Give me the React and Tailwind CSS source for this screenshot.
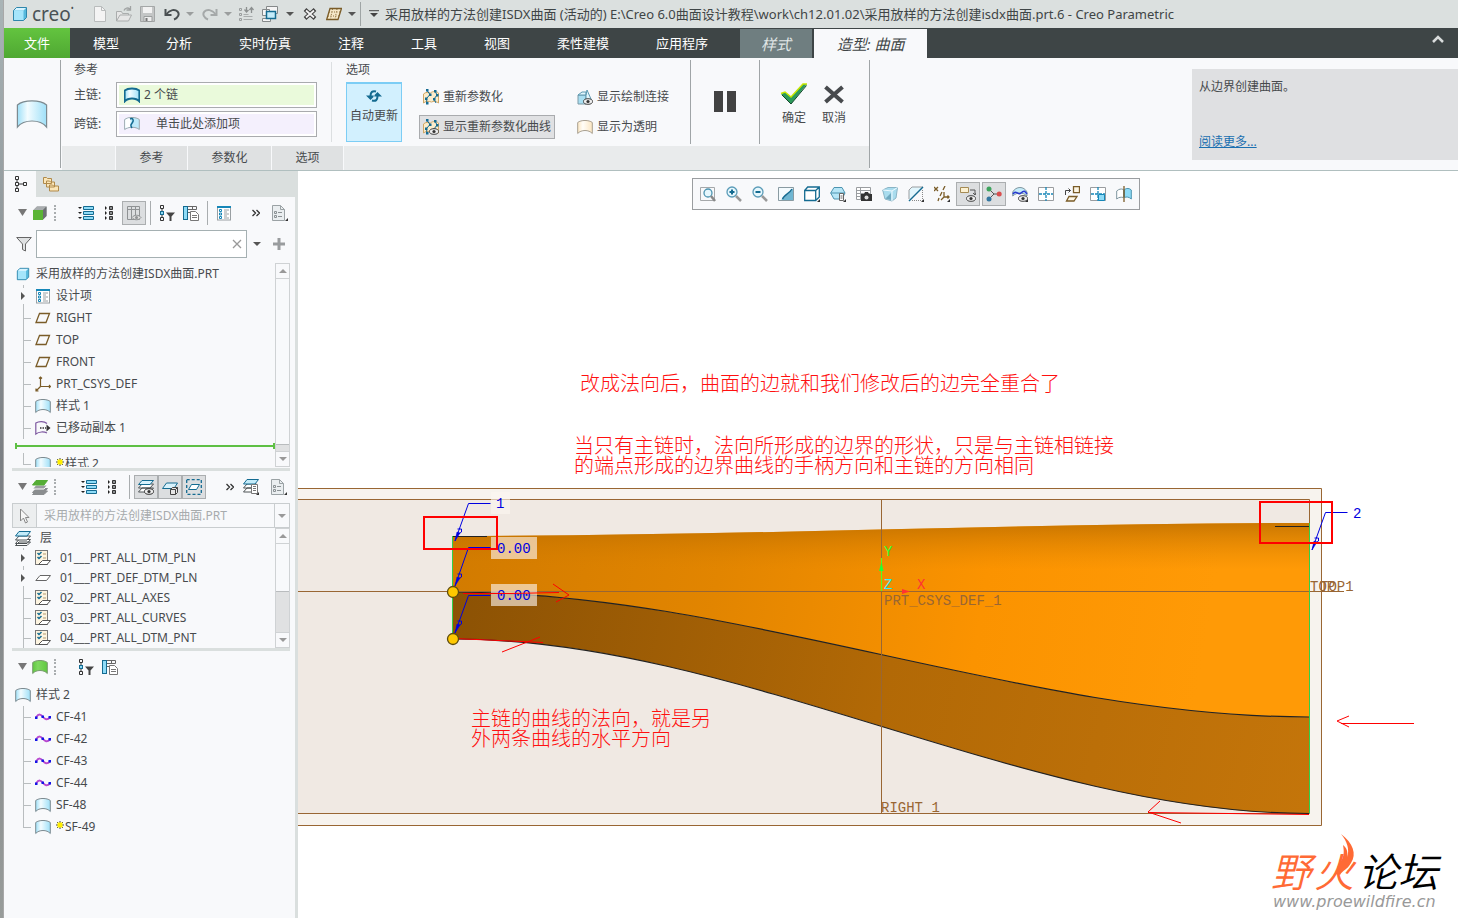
import clsx from 'clsx'

function Icon({ children, className = 'size-4', box = '0 0 16 16' }) {
  return (
    <svg viewBox={box} className={clsx('shrink-0', className)} fill="none" aria-hidden="true">
      {children}
    </svg>
  )
}

/* ---------- shared icons ---------- */

function CubeIcon({ className }) {
  return (
    <Icon className={className}>
      <path d="M1.500 4.500 4.500 1.500H14.500V11.500L11.500 14.500H1.500Z" fill="#57b9dd" />
      <path d="M1.500 4.500 4.500 1.500H14.500L11.500 4.500Z" fill="#d8f4ff" />
      <rect x="1.500" y="4.500" width="10" height="10" fill="#a5e5fb" />
      <path d="M1.500 4.500 4.500 1.500H14.500V11.500L11.500 14.500H1.500Z" stroke="#2f86ab" />
    </Icon>
  )
}

function SurfaceIcon({ className, stroke = '#7c8a90', from = '#f3fcff', to = '#9fe0f8', width = 1 }) {
  const id = 'surf' + from.slice(1) + to.slice(1)
  return (
    <Icon className={className}>
      <defs>
        <linearGradient id={id} x1="0" x2="1">
          <stop offset="0" stopColor={to} />
          <stop offset="0.35" stopColor={from} />
          <stop offset="1" stopColor={to} />
        </linearGradient>
      </defs>
      <path
        d="M.7 3.500C4 .8 12 .8 15.300 3.500V14.500C12 10.500 4 10.500.7 14.500Z"
        fill={`url(#${id})`}
        stroke={stroke}
        strokeWidth={width}
      />
    </Icon>
  )
}

function PlaneIcon() {
  return (
    <Icon>
      <path d="M4.500 3.500H14.500L11 12.500H1Z" stroke="#7a5c28" strokeWidth="1.300" />
    </Icon>
  )
}

function CsysIcon() {
  return (
    <Icon>
      <path d="M5.500 1V10.500H15.500M5.500 10.500 1 15M4 2.500 5.500 1 7 2.500M14 9l1.500 1.500L14 12M1 12.500V15h2.500" stroke="#7a5c28" strokeWidth="1.200" />
    </Icon>
  )
}

function CopyIcon() {
  return (
    <Icon>
      <path d="M12 3.500C9 1 4 1 .8 3V14C4 11.500 9 11.500 12 13" stroke="#7d58a0" strokeWidth="1.200" />
      <path d="M5 8h6" stroke="#333" strokeWidth="1.500" strokeDasharray="1.500 1" />
      <path d="M11.500 4.500 15.500 8l-4 3.500Z" fill="#333" />
    </Icon>
  )
}

function DesignItemsIcon() {
  return (
    <Icon>
      <rect x="1.500" y="1.500" width="13" height="13.500" fill="#fff" stroke="#9aa0a3" />
      <path d="M1 2h14" stroke="#1687b8" strokeWidth="2" />
      <path d="M3.500 4.500h2v2h-2zM3.500 8h2v2h-2zM3.500 11.500h2v2h-2z" stroke="#1687b8" />
      <path d="M8 5h5M8 7h3M8 9h5M8 11h3M8 13h5" stroke="#9aa0a3" />
    </Icon>
  )
}

function CurveIcon() {
  return (
    <Icon>
      <path d="M1 8.500C4 4 6 5.500 8 8s4 3.500 7 .5" stroke="#b94bd0" strokeWidth="2" />
      <path d="M0 7.500h2.500V10H0zM6.500 6.500H9V9H6.500zM13.500 7H16v2.500h-2.500z" fill="#1414e6" />
    </Icon>
  )
}

function ExpandIcon() {
  return (
    <Icon>
      <path d="M5.500 1.500h10v3h-10zM5.500 6.500h10v3h-10zM5.500 11.500h10v3h-10z" fill="#8edbf7" stroke="#146b91" />
      <path d="M0 2h4L2 4zM0 7h4L2 9zM0 12h4l-2 2z" fill="#222" />
    </Icon>
  )
}

function CollapseIcon() {
  return (
    <Icon>
      <path d="M7.500 1.500h3v3h-3zM7.500 6.500h3v3h-3zM7.500 11.500h3v3h-3z" fill="#8c8f91" stroke="#333" />
      <path d="M3 1v4l2-2zM3 6v4l2-2zM3 11v4l2-2z" fill="#222" />
    </Icon>
  )
}

function ColumnsIcon() {
  return (
    <Icon>
      <path d="M1.500 1.500h12v13h-12zM1.500 4.500h12M5.500 1.500v13M9.500 1.500v9" stroke="#8f9294" />
      <path d="M6 12.500c2-3 7-3 9 0-2 3-7 3-9 0Z" fill="#ddd" stroke="#8f9294" />
      <circle cx="10.500" cy="12.500" r="1.500" fill="#8f9294" />
    </Icon>
  )
}

function TreeFilterIcon() {
  return (
    <Icon>
      <path d="M1.500.500h3v3h-3zM1.500 12.500h3v3h-3zM3 3.500V6M3 10v2.500" stroke="#333" />
      <rect x="1.500" y="6.500" width="3" height="3" fill="#8edbf7" stroke="#146b91" />
      <path d="M7 7.500h9l-3.500 4V16h-2v-4.500Z" fill="#444" />
    </Icon>
  )
}

function TreeSettingsIcon() {
  return (
    <Icon>
      <path d="M4.500 1.500h9v3h-9zM9.500 1.500v3M4.500 7.500h3" stroke="#666" />
      <rect x=".5" y="1.500" width="4" height="13" fill="#8edbf7" stroke="#146b91" />
      <path d="M7.500 6.500h5l3 3v6h-8Z" fill="#fff" stroke="#777" />
      <path d="M9 10.500h5M9 12.500h5" stroke="#777" />
    </Icon>
  )
}

function DocIcon() {
  return (
    <Icon>
      <path d="M.5.500h8l4 4v11H.5Z" fill="#eaeef0" stroke="#9ba2a5" />
      <path d="M8.500.500v4h4" stroke="#9ba2a5" />
      <path d="M2.500 6.500h2v2h-2zM2.500 10.500h2v2h-2z" stroke="#8b9194" />
      <path d="M6 7.500h4M6 11.500h4" stroke="#8b9194" />
      <path d="M16 13v3h-3Z" fill="#333" />
    </Icon>
  )
}

function LayersIcon({ green }) {
  return (
    <Icon>
      <path d="M4 9.500h11.500L12 13.500H.5ZM4 12h11.500L12 15.500H.5Z" fill={green ? '#8a8d8f' : '#fff'} stroke={green ? '#8a8d8f' : '#4d5254'} />
      <path d="M4 6h11.500L12 10H.5Z" fill={green ? '#9a9d9f' : '#fff'} stroke={green ? '#fff' : '#4d5254'} />
      <path d="M4 1.500h11.500L12 6H.5Z" fill={green ? '#55ad35' : '#c4ecfa'} stroke={green ? '#55ad35' : '#146b91'} />
    </Icon>
  )
}

function LayerEyeIcon() {
  return (
    <Icon>
      <path d="M4 5h11.500L12 9H.5ZM4 9h11.500L12 13H.5Z" fill="#fff" stroke="#4d5254" />
      <path d="M4 1.500h11.500L12 5.500H.5Z" fill="#d8f2fc" stroke="#146b91" />
      <ellipse cx="11" cy="12.500" rx="4.500" ry="2.800" fill="#eee" stroke="#333" />
      <circle cx="11" cy="12.500" r="1.600" fill="#333" />
    </Icon>
  )
}

function LayerCubeIcon() {
  return (
    <Icon>
      <path d="M4.500 4h11L12 9.500H.5Z" fill="#d8f2fc" stroke="#146b91" />
      <path d="M8.500 10.500h5v5h-5zM8.500 10.500l2-2h5v5l-2 2M13.500 10.500l2-2" fill="#e6e6e6" stroke="#444" />
    </Icon>
  )
}

function LayerSelectIcon() {
  return (
    <Icon>
      <rect x=".7" y=".7" width="14.600" height="14.600" stroke="#146b91" strokeWidth="1.300" strokeDasharray="3 2" />
      <path d="M5.500 5.500h8L10.500 10.500h-8Z" fill="#fff" stroke="#146b91" />
    </Icon>
  )
}

function LayerListIcon() {
  return (
    <Icon>
      <path d="M4 5h9.500L10 9H.5ZM4 9h9.500L10 13H.5Z" fill="#fff" stroke="#4d5254" />
      <path d="M4 .5h11.500L12 5H.5Z" fill="#c4ecfa" stroke="#146b91" />
      <path d="M8.500 5.500h6v9h-6z" fill="#fff" stroke="#777" />
      <path d="M10 7.500h3M10 9.500h3M10 11.500h3" stroke="#777" />
      <path d="M16 13v3h-3Z" fill="#333" />
    </Icon>
  )
}

function RuleIcon() {
  return (
    <Icon>
      <rect x=".5" y=".5" width="12" height="14" fill="#fdf4e0" stroke="#777" />
      <path d="M2.500 3 4 4.500 6.500 2M2.500 7 4 8.500 6.500 6" stroke="#146b91" strokeWidth="1.500" />
      <path d="M8 4h3M8 8h3" stroke="#b19a70" />
      <path d="M7.500 10.500h8L12 14.500H3.500Z" fill="#fff" stroke="#555" />
    </Icon>
  )
}

function LayerPlaneIcon() {
  return (
    <Icon>
      <path d="M5 5.500h10.500L11.500 10.500H.8Z" fill="#fff" stroke="#666" />
    </Icon>
  )
}

function Spark() {
  return (
    <Icon className="size-2" box="0 0 8 8">
      <path d="M4 0v8M0 4h8M1 1l6 6M7 1 1 7" stroke="#444" />
      <path d="M1.500 1.500h5v5h-5z" fill="#ffee00" />
    </Icon>
  )
}

function Eye() {
  return (
    <>
      <ellipse cx="11" cy="12.500" rx="4.500" ry="2.800" fill="#eee" stroke="#444" />
      <circle cx="11" cy="12.500" r="1.600" fill="#333" />
    </>
  )
}

function Caret({ className = 'text-[#555]' }) {
  return (
    <Icon className={clsx('h-1 w-2', className)} box="0 0 8 4">
      <path d="M0 0h8L4 4Z" fill="currentColor" />
    </Icon>
  )
}

/* ---------- title bar ---------- */

function TitleBar() {
  return (
    <header className="flex h-7 items-center overflow-hidden bg-[#dbe0df] pl-2 text-[13px] leading-4 text-[#3f4546]">
      <CubeIcon className="size-4" />
      <span className="ml-1 w-14 text-[19px] leading-5 text-[#4a5255]">
        creo<span className="align-top text-[8px] leading-2">•</span>
      </span>
      <div className="flex items-center">
        <button type="button" aria-label="新建">
          <Icon className="ml-1 size-4">
            <path d="M2.500.500h7l4 4v11h-11Z" fill="#f4f4f4" stroke="#b9bcbc" />
            <path d="M9.500.500v4h4" stroke="#b9bcbc" />
          </Icon>
        </button>
        <button type="button" aria-label="打开" className="ml-2">
          <Icon>
            <path d="M.5 15V5.500h5l1 2h6V9M.5 15 4 9h11.500L12.500 15Z" fill="#e6e6e6" stroke="#aaadad" />
            <path d="M8 4.500c1-3 4-3 6-1.500M14.500 0v4h-4" stroke="#a0a3a3" strokeWidth="1.300" />
          </Icon>
        </button>
        <button type="button" aria-label="保存" className="ml-2">
          <Icon>
            <path d="M.5.500h14v15h-14z" fill="#c4c6c6" stroke="#a4a7a7" />
            <path d="M3 1h9v6H3z" fill="#f2f2f2" />
            <path d="M4 10.500h8v5H4z" fill="#eee" stroke="#9b9e9e" />
            <path d="M5.500 12h2v3h-2z" fill="#777" />
          </Icon>
        </button>
        <button type="button" aria-label="撤消" className="ml-2">
          <Icon>
            <path d="M1.500 3v6h6" stroke="#4a5052" strokeWidth="2" />
            <path d="M2.500 8C6 3.500 11 3 13.500 5.500S14 12 10 13.500" stroke="#4a5052" strokeWidth="2" />
          </Icon>
        </button>
        <span className="ml-1.5"><Caret className="text-[#9b9e9e]" /></span>
        <button type="button" aria-label="重做" className="ml-2">
          <Icon>
            <path d="M14.500 3v6h-6" stroke="#a5a9a9" strokeWidth="2" />
            <path d="M13.500 8C10 3.500 5 3 2.500 5.500S2 12 6 13.500" stroke="#a5a9a9" strokeWidth="2" />
          </Icon>
        </button>
        <span className="ml-1.5"><Caret className="text-[#9b9e9e]" /></span>
        <button type="button" aria-label="重新生成" className="ml-1.5">
          <Icon>
            <path d="M1.500 2.500h2v2h-2zM1.500 7.500h2v2h-2zM1.500 12.500h2v2h-2z" stroke="#999d9d" />
            <path d="M5.500 8.500h5M5.500 10.500h9M5.500 13.500h9" stroke="#a9adad" />
            <path d="M8.500 1v5m-2-2.500 2 2.500 2-2M13.500 7V2m-2 2 2-2.500 2 2.500" stroke="#8c9090" strokeWidth="1.300" />
          </Icon>
        </button>
        <button type="button" aria-label="窗口" className="ml-2">
          <Icon>
            <path d="M4.500.500h11v7h-11zM.5 3.500h7v6h-7zM.5 12.500h8v3h-8z" fill="#f5f5f5" stroke="#85898a" />
            <path d="M4.500 5.500h9v7h-9z" fill="#c4ecfa" stroke="#146b91" strokeWidth="1.500" />
          </Icon>
        </button>
        <span className="ml-2"><Caret /></span>
        <button type="button" aria-label="关闭窗口" className="ml-2">
          <Icon>
            <path d="M3 3.500l10 9M13 3.500l-10 9" stroke="#444" strokeWidth="4" />
            <path d="M4 4.500l8 7M12 4.500l-8 7" stroke="#f4f4f4" strokeWidth="1.800" />
          </Icon>
        </button>
        <button type="button" aria-label="草绘" className="ml-2">
          <Icon>
            <path d="M4 2.500h11.500L12 13.500H.7Z" fill="#f5e8c8" stroke="#7a5c28" strokeWidth="1.300" />
            <path d="M6.500 3 4.500 13M11 3 9 13M3 6h11M2 10h11" stroke="#8a6d3a" strokeDasharray="1 1.500" />
          </Icon>
        </button>
        <span className="ml-1.5"><Caret /></span>
        <span className="ml-1 h-6 w-px bg-[#9fa5a5]" />
        <span className="ml-2">
          <Icon className="h-2 w-2.5" box="0 0 10 8">
            <path d="M0 .7h10" stroke="#444" />
            <path d="M1 3h8L5 7Z" fill="#444" />
          </Icon>
        </span>
      </div>
      <h1 className="ml-1.5 whitespace-nowrap">
        采用放样的方法创建ISDX曲面 (活动的) E:\Creo 6.0曲面设计教程\work\ch12.01.02\采用放样的方法创建isdx曲面.prt.6 - Creo Parametric
      </h1>
    </header>
  )
}

/* ---------- ribbon ---------- */

const tabs = ['模型', '分析', '实时仿真', '注释', '工具', '视图', '柔性建模', '应用程序']

function TabBar() {
  return (
    <nav className="flex h-[30px] bg-[#3e4546] text-[13px] leading-4 text-white">
      <button type="button" className="w-[66px] shrink-0 bg-linear-to-b from-[#63c43f] to-[#4fa832]">
        文件
      </button>
      <div className="flex gap-[47px] pr-8 pl-[23px]">
        {tabs.map((t) => (
          <button key={t} type="button" className="whitespace-nowrap">
            {t}
          </button>
        ))}
      </div>
      <button type="button" className="mt-px w-[72px] shrink-0 bg-[#6f7e80] text-[15px] text-[#e0e6e6] italic">
        样式
      </button>
      <button type="button" className="mt-px ml-0.5 w-[113px] shrink-0 bg-[#f8f9fb] text-[15px] text-[#3f4546] italic">
        造型: 曲面
      </button>
      <button type="button" aria-label="折叠功能区" className="mr-3.5 ml-auto">
        <Icon className="mb-2 h-2 w-3" box="0 0 12 8">
          <path d="M1 7 6 2l5 5" stroke="#d9dcdc" strokeWidth="2.500" />
        </Icon>
      </button>
    </nav>
  )
}

function ChainField({ id, label, value, tone, icon }) {
  return (
    <div className="flex items-center">
      <label htmlFor={id} className="w-[42px]">
        {label}
      </label>
      <div className="flex h-[26px] w-[201px] border border-[#a9abae] bg-white p-0.5">
        <div className={clsx('flex w-full items-center pl-[5px]', tone)}>
          {icon}
          <input id={id} readOnly value={value} className={clsx('w-36 bg-transparent outline-none', id === 'cross' ? 'ml-4' : 'ml-1')} />
        </div>
      </div>
    </div>
  )
}

function ReparamIcon({ eye }) {
  return (
    <Icon>
      <path d="M.5 5c2-2 5-2 7-1 2-2 6-2 8 0v10c-2-2-5-2-7-1-3-1-6-1-8 1Z" fill="#fbeccb" stroke="#d0a765" />
      <path d="M4 1.500l3 4-3.500 4 .5 5M12 2l2 4-3 4 2 4" stroke="#146b91" />
      <path d="M3 0h2.500v2.500H3zM6 4.500h2.500V7H6zM2 8.500h2.500V11H2zM11 1h2.500v2.500H11zM13 5h2.500v2.500H13zM10 9h2.500v2.500H10zM3 13h2.500v2.500H3z" fill="#146b91" />
      {eye && <Eye />}
    </Icon>
  )
}

function Ribbon() {
  return (
    <section className="flex min-h-[113px] border-b border-[#b0bfbf] bg-[#f8f9fb] text-xs leading-4 text-[#474a4d]">
      <div className="my-0.5 flex w-[57px] shrink-0 items-center justify-center border-r border-[#a0a5a7]">
        <SurfaceIcon className="size-8" width={0.6} />
      </div>
      <div className="ml-px flex shrink-0 flex-col">
        <div className="flex h-[88px]">
          <div className="pt-1 pl-3">
            <h2>参考</h2>
            <div className="mt-1 flex flex-col gap-[3px]">
              <ChainField
                id="primary"
                label="主链:"
                value="2 个链"
                tone="bg-[#eafadb]"
                icon={<SurfaceIcon stroke="#146b91" width={1.8} />}
              />
              <ChainField
                id="cross"
                label="跨链:"
                value="单击此处添加项"
                tone="bg-[#f4f0fd]"
                icon={
                  <Icon>
                    <path d="M.7 3.500C4 .8 12 .8 15.300 3.500V13.500C12 10.500 4 10.500.7 13.500Z" fill="#bfeafa" stroke="#9aa6ab" />
                    <path d="M1.200 4C3 2.500 5 2 6.500 2v9c-2 0-4 .5-5.300 1.500Z" fill="#fff" />
                    <path d="M6 3c3-1.500 4 1.500 2.500 3.500S6 9 8 12" stroke="#146b91" strokeWidth="1.500" />
                  </Icon>
                }
              />
            </div>
          </div>
          <div className="mt-1 mb-1 ml-3.5 w-px bg-[#dcdfe1]" />
          <div className="ml-3.5 pt-1">
            <h2>选项</h2>
            <div className="mt-1 flex">
              <button type="button" className="flex h-[60px] w-14 flex-col items-center border border-t-2 border-[#7ccdf5] bg-[#d2f0fe] pt-1">
                <Icon>
                  <path d="M10 3.500C6.500 2.500 4.500 4 4.500 8M6 12.500c4 1 5.500-.5 5.500-4.500" stroke="#146b91" strokeWidth="2" />
                  <path d="M0 7.500h9L4.500 12ZM7 8.500h9L11.500 4Z" fill="#146b91" />
                </Icon>
                <span className="mt-1 whitespace-nowrap">自动更新</span>
              </button>
              <div className="ml-[17px] flex flex-col gap-1.5 pt-[3px]">
                <button type="button" className="flex h-6 items-center gap-1 pl-1">
                  <ReparamIcon />
                  重新参数化
                </button>
                <button type="button" className="flex h-6 w-34 items-center gap-1 border border-[#a9abae] bg-[#e0e1e3] pl-[3px] whitespace-nowrap">
                  <ReparamIcon eye />
                  显示重新参数化曲线
                </button>
              </div>
              <div className="ml-[22px] flex flex-col gap-1.5 pt-[3px]">
                <button type="button" className="flex h-6 items-center gap-1">
                  <Icon>
                    <path d="M1 6h8v9H1z" fill="#a9dff2" stroke="#7d9aa6" />
                    <path d="M1 6l4-3h4v3ZM9 6l1-5 4 9v4H9Z" fill="#e2f6fd" stroke="#5b98b1" />
                    <Eye />
                  </Icon>
                  显示绘制连接
                </button>
                <button type="button" className="flex h-6 items-center gap-1">
                  <SurfaceIcon from="#fffdf8" to="#fbe6c2" stroke="#a89f90" />
                  显示为透明
                </button>
              </div>
            </div>
          </div>
          <div className="my-0.5 ml-[21px] w-px bg-[#a0a5a7]" />
          <button type="button" aria-label="暂停" className="flex w-[68px] items-center justify-center">
            <Icon className="h-6 w-6" box="0 0 24 24">
              <path d="M1 1h9v21H1zM14 1h9v21h-9z" fill="#424242" />
            </Icon>
          </button>
          <div className="my-0.5 w-px bg-[#a0a5a7]" />
          <div className="flex gap-3 pt-6 pr-[21px] pl-5">
            <button type="button" className="flex w-7 flex-col items-center">
              <Icon className="h-6 w-7" box="0 0 28 24">
                <path d="M1 12l4-2 6 5L23 2h4L11 22Z" fill="#2c9a5b" />
                <path d="M1 11.500l4-1.500 6 5L23 2h4" stroke="#c6e600" strokeWidth="1.500" />
                <path d="M2 13l9 9L26.500 3.500" stroke="#12472a" />
              </Icon>
              <span className="mt-1 whitespace-nowrap">确定</span>
            </button>
            <button type="button" className="flex w-7 flex-col items-center">
              <Icon className="h-6 w-7" box="0 0 28 24">
                <path d="M5.500 5l17 15M22.500 5l-17 15" stroke="#474a4d" strokeWidth="4" />
              </Icon>
              <span className="mt-1 whitespace-nowrap">取消</span>
            </button>
          </div>
        </div>
        <div className="flex h-6 gap-px">
          <span className="w-[53px] bg-[#e9ebec]" />
          <button type="button" className="w-[71px] bg-[#dfe1e2]">参考</button>
          <button type="button" className="w-[83px] bg-[#dfe1e2]">参数化</button>
          <button type="button" className="w-[71px] bg-[#dfe1e2]">选项</button>
          <span className="flex-1 bg-[#e9ebec]" />
        </div>
      </div>
      <div className="my-0.5 w-px bg-[#a0a5a7]" />
      <aside className="mt-[11px] ml-auto flex h-[91px] w-[266px] flex-col justify-between bg-[#dfe0e2] px-[7px] py-2.5">
        <p>从边界创建曲面。</p>
        <a href="#more" className="text-[#1a6fb0] underline">阅读更多...</a>
      </aside>
    </section>
  )
}

/* ---------- side panels ---------- */

function ToolButton({ label, pressed, className, children }) {
  return (
    <button
      type="button"
      aria-label={label}
      className={clsx(
        'flex h-6 shrink-0 items-center justify-center',
        pressed ? 'w-6 border border-[#abaeb0] bg-[#dcdee0]' : 'w-4',
        className,
      )}
    >
      {children}
    </button>
  )
}

function PanelHandle({ children }) {
  return (
    <>
      <Icon className="h-2 w-2.5" box="0 0 10 8">
        <path d="M0 0h9L4.500 7Z" fill="#777" />
      </Icon>
      <span className="ml-1">{children}</span>
      <span className="ml-1.5 h-4 border-l-2 border-dotted border-[#a9adaf]" />
    </>
  )
}

function Scrollbar({ thumb }) {
  return (
    <div className="flex w-[15px] shrink-0 flex-col border border-[#cfd2d4] bg-[#e0e1e2]">
      <div className="flex h-[15px] items-center justify-center border-b border-[#cfd2d4] bg-[#f8f9fb]">
        <Icon className="h-1 w-2" box="0 0 8 4"><path d="M0 4h8L4 0Z" fill="#999" /></Icon>
      </div>
      <div className={clsx('border-b border-[#b9bcbe] bg-[#f8f9fb]', thumb)} />
      <div className="mt-auto flex h-[15px] items-center justify-center border-t border-[#cfd2d4] bg-[#f8f9fb]">
        <Caret className="text-[#999]" />
      </div>
    </div>
  )
}

function TreeRow({ icon, label, expander, last, spark, wide, height = 'h-[22px]' }) {
  return (
    <li className={clsx('flex items-center', height)}>
      <span className="ml-[15px] flex w-2 flex-col items-center self-stretch">
        <span className={clsx('w-px flex-1 bg-[#b9bdbf]', expander && 'mb-1')} />
        {expander && (
          <Icon className="h-2 w-1.5" box="0 0 6 8"><path d="M1 0v8l4-4Z" fill="#555" /></Icon>
        )}
        <span className={clsx('w-px flex-1', last ? 'bg-transparent' : 'bg-[#b9bdbf]', expander && 'mt-1')} />
      </span>
      <span className="flex w-2">
        <span className={clsx('-ml-1 h-px w-2 shrink-0', !expander && 'bg-[#b9bdbf]')} />
      </span>
      <span className={wide ? 'mr-[9px]' : 'mr-[5px]'}>{icon}</span>
      {spark && <span className="mr-px mb-1"><Spark /></span>}
      <span className="whitespace-nowrap">{label}</span>
    </li>
  )
}

function ModelTree() {
  return (
    <section>
      <div className="flex h-8 items-center pl-3.5">
        <PanelHandle>
          <Icon>
            <path d="M1.500 5 5 1.500h9.500V11L11 14.500" fill="#8b8f91" />
            <path d="M5 1.500h9.500L11 5H1.500Z" fill="#a9adaf" />
            <path d="M11 5l3.500-3.500V11L11 14.500Z" fill="#6c7072" />
            <path d="M1 5h10v10H1z" fill="#5bb535" />
          </Icon>
        </PanelHandle>
        <ToolButton label="全部展开" className="ml-[22px]"><ExpandIcon /></ToolButton>
        <ToolButton label="全部折叠" className="ml-2"><CollapseIcon /></ToolButton>
        <ToolButton label="列显示" pressed className="ml-1"><ColumnsIcon /></ToolButton>
        <span className="ml-1 h-6 w-px bg-[#a9adaf]" />
        <ToolButton label="树过滤器" className="ml-2"><TreeFilterIcon /></ToolButton>
        <ToolButton label="树列" className="ml-2"><TreeSettingsIcon /></ToolButton>
        <span className="ml-2 h-6 w-px bg-[#a9adaf]" />
        <ToolButton label="设计项" className="ml-2"><DesignItemsIcon /></ToolButton>
        <button type="button" aria-label="更多" className="ml-4 w-4">
          <Icon className="mx-auto size-2" box="0 0 8 8"><path d="M.5 1l3 3-3 3M4.500 1l3 3-3 3" stroke="#333" strokeWidth="1.300" /></Icon>
        </button>
        <ToolButton label="选项" className="ml-2"><DocIcon /></ToolButton>
      </div>
      <div className="flex h-[29px] items-center pl-3">
        <Icon>
          <path d="M.7 1.500h14.600L9.500 8v7l-3-1.500V8Z" fill="#dfe1e2" stroke="#666" />
        </Icon>
        <div className="ml-1 flex h-7 w-[211px] items-center border border-[#a5b0b2] bg-white">
          <input aria-label="过滤" className="min-w-0 flex-1 px-1 outline-none" />
          <button type="button" aria-label="清除" className="mr-1">
            <Icon className="size-2.5" box="0 0 10 10"><path d="M1 1l8 8M9 1 1 9" stroke="#999" strokeWidth="1.300" /></Icon>
          </button>
        </div>
        <span className="ml-1.5"><Caret /></span>
        <button type="button" aria-label="添加" className="ml-3">
          <Icon className="size-3" box="0 0 12 12"><path d="M6 0v12M0 6h12" stroke="#999c9e" strokeWidth="3" /></Icon>
        </button>
      </div>
      <div className="mt-[5px] flex h-[204px] pr-[5px]">
        <ul className="min-w-0 flex-1 overflow-hidden">
          <li className="flex h-[22px] items-center gap-[5px] pl-[11px]">
            <span className="flex w-4 justify-center"><CubeIcon className="size-3.5" /></span>
            <span className="whitespace-nowrap">采用放样的方法创建ISDX曲面.PRT</span>
          </li>
          <TreeRow icon={<DesignItemsIcon />} label="设计项" expander />
          <TreeRow icon={<PlaneIcon />} label="RIGHT" />
          <TreeRow icon={<PlaneIcon />} label="TOP" />
          <TreeRow icon={<PlaneIcon />} label="FRONT" />
          <TreeRow icon={<CsysIcon />} label="PRT_CSYS_DEF" />
          <TreeRow icon={<SurfaceIcon />} label="样式 1" />
          <TreeRow icon={<CopyIcon />} label="已移动副本 1" />
          <li className="flex h-[14px] items-center pl-[11px]">
            <span className="h-1.5 w-0.5 bg-[#5ec044]" />
            <span className="h-0.5 flex-1 bg-[#5ec044]" />
            <span className="h-1.5 w-0.5 bg-[#5ec044]" />
          </li>
          <TreeRow icon={<SurfaceIcon />} label="样式 2" spark last />
        </ul>
        <Scrollbar thumb="h-[166px]" />
      </div>
    </section>
  )
}

const layers = ['02___PRT_ALL_AXES', '03___PRT_ALL_CURVES', '04___PRT_ALL_DTM_PNT']

function LayerTree() {
  return (
    <section>
      <div className="flex h-8 items-center pl-3.5">
        <PanelHandle><LayersIcon green /></PanelHandle>
        <ToolButton label="全部展开" className="ml-[25px]"><ExpandIcon /></ToolButton>
        <ToolButton label="全部折叠" className="ml-2"><CollapseIcon /></ToolButton>
        <span className="ml-2 h-6 w-px bg-[#a9adaf]" />
        <div className="ml-1 flex">
          <ToolButton label="层显示" pressed><LayerEyeIcon /></ToolButton>
          <ToolButton label="层项" pressed><LayerCubeIcon /></ToolButton>
          <ToolButton label="层选择" pressed><LayerSelectIcon /></ToolButton>
        </div>
        <button type="button" aria-label="更多" className="ml-4 w-4">
          <Icon className="mx-auto size-2" box="0 0 8 8"><path d="M.5 1l3 3-3 3M4.500 1l3 3-3 3" stroke="#333" strokeWidth="1.300" /></Icon>
        </button>
        <ToolButton label="层" className="ml-[5px]"><LayerListIcon /></ToolButton>
        <ToolButton label="设置" className="ml-3"><DocIcon /></ToolButton>
      </div>
      <div className="mr-[5px] ml-2 flex h-[25px] border border-[#c9cdcf]">
        <span className="flex w-6 items-center justify-center border-r border-[#c9cdcf] bg-[#eceeef]">
          <Icon><path d="M3.500 1v12l3-3 2 5 2-1-2-4.500H12Z" fill="#f6f6f6" stroke="#888" /></Icon>
        </span>
        <div className="flex min-w-0 flex-1 items-center">
          <select aria-label="活动层对象" className="h-full min-w-0 flex-1 appearance-none pl-[7px] text-[#a7abad]">
            <option>采用放样的方法创建ISDX曲面.PRT</option>
          </select>
          <span className="flex h-full w-[15px] items-center justify-center border-l border-[#c9cdcf]"><Caret className="text-[#999]" /></span>
        </div>
      </div>
      <div className="flex h-[120px] pr-[5px]">
        <ul className="min-w-0 flex-1 overflow-hidden">
          <li className="flex h-5 items-center gap-[9px] pl-[11px]">
            <LayersIcon />
            层
          </li>
          <TreeRow height="h-5" wide icon={<RuleIcon />} label="01___PRT_ALL_DTM_PLN" expander />
          <TreeRow height="h-5" wide icon={<LayerPlaneIcon />} label="01___PRT_DEF_DTM_PLN" expander />
          {layers.map((l) => (
            <TreeRow key={l} height="h-5" wide icon={<RuleIcon />} label={l} />
          ))}
        </ul>
        <Scrollbar thumb="h-12" />
      </div>
    </section>
  )
}

function StyleTree() {
  return (
    <section>
      <div className="flex h-8 items-center pl-3.5">
        <PanelHandle>
          <SurfaceIcon from="#7fd860" to="#5fc93f" stroke="#7a9a70" />
        </PanelHandle>
        <ToolButton label="树过滤器" className="ml-[22px]"><TreeFilterIcon /></ToolButton>
        <ToolButton label="树列" className="ml-2"><TreeSettingsIcon /></ToolButton>
      </div>
      <ul className="pt-px">
        <li className="flex h-[22px] items-center gap-[5px] pl-[11px]">
          <SurfaceIcon />
          样式 2
        </li>
        {['CF-41', 'CF-42', 'CF-43', 'CF-44'].map((c) => (
          <TreeRow key={c} icon={<CurveIcon />} label={c} />
        ))}
        <TreeRow icon={<SurfaceIcon />} label="SF-48" />
        <TreeRow icon={<SurfaceIcon />} label="SF-49" spark last />
      </ul>
    </section>
  )
}

function Sidebar() {
  return (
    <aside className="w-[294px] shrink-0 border-r-3 border-[#dadfde] bg-[#f8f9fb] text-xs leading-4 text-[#474a4d]">
      <div className="flex h-[26px] bg-[#dadfde]">
        <button type="button" aria-label="模型树" className="flex w-8 items-center justify-center bg-[#f8f9fb] pl-px">
          <Icon>
            <path d="M2.500.500h3v3h-3zM2.500 6.500h3v3h-3zM2.500 12.500h3v3h-3zM10.500 6.500h3v3h-3zM4 3.500v3M4 9.500v3M5.500 8h5" stroke="#333" />
          </Icon>
        </button>
        <button type="button" aria-label="文件夹浏览器" className="ml-[7px]">
          <Icon>
            <path d="M.5 1.500h3l1 1h4v5h-8zM3.500 5h3l1 1h4v5h-8zM6.500 9h3l1 1h5v5h-9z" fill="#fbe6b8" stroke="#b08a4a" />
          </Icon>
        </button>
      </div>
      <ModelTree />
      <div className="mt-px mr-[5px] ml-2 h-[3px] bg-[#dadfde]" />
      <LayerTree />
      <div className="mr-[5px] ml-2 h-[3px] bg-[#dadfde]" />
      <StyleTree />
    </aside>
  )
}

/* ---------- graphics area ---------- */

const corner = <path d="M16 13v3h-3Z" fill="#333" />

const viewTools = [
  {
    name: '重新调整',
    icon: (
      <>
        <path d="M.5 1.500h14v13H.5z" stroke="#a5a8aa" />
        <circle cx="8" cy="7" r="4" fill="#e6f7fd" stroke="#4d94b0" strokeWidth="1.300" />
        <path d="m11 10 4 5" stroke="#888" strokeWidth="2.500" />
      </>
    ),
  },
  {
    name: '放大',
    icon: (
      <>
        <circle cx="6" cy="6" r="5" fill="#e6f7fd" stroke="#5b9cb8" strokeWidth="1.300" />
        <path d="M6 3.500v5M3.500 6h5" stroke="#146b91" strokeWidth="2" />
        <path d="m10 10 5 5" stroke="#999" strokeWidth="2.500" />
      </>
    ),
  },
  {
    name: '缩小',
    icon: (
      <>
        <circle cx="6" cy="6" r="5" fill="#e6f7fd" stroke="#5b9cb8" strokeWidth="1.300" />
        <path d="M3.500 6h5" stroke="#146b91" strokeWidth="2" />
        <path d="m10 10 5 5" stroke="#999" strokeWidth="2.500" />
      </>
    ),
  },
  {
    name: '重画',
    icon: (
      <>
        <path d="M.5 1.500h15v13H.5z" fill="#6fb6d2" stroke="#8a9ba2" />
        <path d="M1 2h14C14 6 9 8 6 12l-3 2H1Z" fill="#f4fbfe" />
        <path d="M4.500 13C6 9 12 7 14 3" stroke="#146b91" strokeWidth="1.500" />
      </>
    ),
  },
  {
    name: '显示样式',
    icon: (
      <>
        <path d="M.7 4.500h11v10H.7zM.7 4.500l3-3.500h11.600v10l-3.600 3.500M11.700 4.500 15.300 1" fill="#fff" stroke="#146b91" strokeWidth="1.300" />
        {corner}
      </>
    ),
  },
  {
    name: '已保存方向',
    icon: (
      <>
        <path d="M.7 7 4 1.500h8L15 7l-3 6H4Z" fill="#b6e6f7" stroke="#4d94b0" />
        <path d="M.7 7H15" stroke="#4d94b0" />
        <path d="M9.500 7.500h4v7h-4z" fill="#fff" stroke="#666" />
        <path d="M10.500 10h2M10.500 12h2" stroke="#666" />
        {corner}
      </>
    ),
  },
  {
    name: '视图管理器',
    icon: (
      <>
        <path d="M.5 1.500h14v12H.5zM.5 4.500h14M.5 7.500h14M.5 10.500h14M4.500 1.500v12" stroke="#9a9da0" fill="#fff" />
        <path d="M5 8h3l1-2h3l1 2h3v7H5z" fill="#333" />
        <circle cx="10.500" cy="11.500" r="2" fill="#ddd" />
      </>
    ),
  },
  {
    name: '透视图',
    icon: (
      <>
        <path d="M.7 4 6 1.500h9.500L14 12l-4 3-7-2Z" fill="#a9dcee" stroke="#8ab4c5" />
        <path d="M1 4l9 1 5.500-3.500M10 5v10" stroke="#eefaff" />
        <path d="M3.500 12.500 9 7v7Z" fill="#6fa9c0" />
      </>
    ),
  },
  {
    name: '截面',
    icon: (
      <>
        <path d="M1 13V4l3-3h11" stroke="#9a9da0" fill="#e2f6fd" />
        <path d="M14.500 4v10.500H4" stroke="#888" strokeDasharray="1 1" />
        <path d="M1 15 15 1" stroke="#146b91" strokeWidth="1.500" />
        {corner}
      </>
    ),
  },
  {
    name: '基准显示过滤器',
    icon: (
      <>
        <path d="m0 1 4 4M4 1 0 5M11 0 9 4M8 6l-2 4M5 12l-1 3M10 6v5h5M10 11l-3 3M13.500 9.500 15 11l-1.500 1.500" stroke="#7a5c28" strokeWidth="1.300" />
        {corner}
      </>
    ),
  },
  {
    name: '注释显示',
    on: true,
    icon: (
      <>
        <path d="M.5 1.500h8v5h-8z" fill="#fcf1d2" stroke="#a58b55" />
        <path d="M10 4h5v5m-2-2 2 2 1-2" stroke="#555" />
        <Eye />
      </>
    ),
  },
  {
    name: '旋转中心',
    on: true,
    icon: (
      <>
        <path d="M3 3l5 5-5 5M8 8h5" stroke="#555" />
        <circle cx="3" cy="3" r="2.500" fill="#3da35d" />
        <circle cx="3" cy="13" r="2.500" fill="#3477a0" />
        <circle cx="13.200" cy="8" r="2.500" fill="#d94f4f" />
      </>
    ),
  },
  {
    name: '曲面显示',
    icon: (
      <>
        <path d="M.7 6C4 0 12 0 15 6v4C11 6 5 6 .7 10Z" fill="#c4ecfa" stroke="#7f969f" />
        <path d="M1 8c3-5 5 2 8-1s4-2 6 1" stroke="#2a3ad0" strokeWidth="1.500" />
        <Eye />
        {corner}
      </>
    ),
  },
  {
    name: '分割视图',
    icon: (
      <>
        <path d="M.5 1.500h15v13H.5z" fill="#fff" stroke="#9a9da0" />
        <path d="M8 1v14M1 8h14" stroke="#1687b8" strokeWidth="1.300" strokeDasharray="3 1" />
      </>
    ),
  },
  {
    name: '设置活动平面',
    icon: (
      <>
        <path d="M9.500.700h6v6h-6zM5 10.500h8l-3 4.500H2.500Z" fill="#fdf6e4" stroke="#7a5c28" strokeWidth="1.300" />
        <path d="M1.500 9V4.500h5M4.500 2.500l2 2-2 2" stroke="#444" />
      </>
    ),
  },
  {
    name: '活动窗口',
    icon: (
      <>
        <path d="M.5 1.500h15v13H.5z" fill="#fff" stroke="#9a9da0" />
        <path d="M8 1v14M1 8h14" stroke="#1687b8" strokeWidth="1.300" strokeDasharray="3 1" />
        <path d="M8.500 8.500h6v6h-6z" fill="#8edbf7" stroke="#1687b8" />
      </>
    ),
  },
  {
    name: '镜像',
    icon: (
      <>
        <path d="M.7 5C3 3 5 2.500 7.500 3.500v8C5 11 3 11 .7 13Z" fill="#fff" stroke="#7f969f" />
        <path d="M8.500 3.500c2-1.500 5-1.500 6.800.5v9c-2-2-5-2.500-6.800-1.500Z" fill="#8edbf7" stroke="#4d94b0" />
        <path d="M8 0v16" stroke="#7a5c28" strokeWidth="1.300" />
      </>
    ),
  },
]

function ViewToolbar() {
  return (
    <div className="absolute top-[7px] left-[394px] flex h-8 items-center gap-0.5 border border-[#9a9da0] bg-[#f8f9fb] px-[3px]">
      {viewTools.map((t) => (
        <button
          key={t.name}
          type="button"
          aria-label={t.name}
          className={clsx('flex size-6 items-center justify-center', t.on && 'border border-[#abaeb0] bg-[#dcdee0]')}
        >
          <Icon>{t.icon}</Icon>
        </button>
      ))}
    </div>
  )
}

function Leader({ x, y, dy }) {
  return (
    <g transform={`translate(${x} ${y})`} stroke="#0000e0">
      <path d={`M22.500 .500H.500L-13 ${dy}`} />
      <path d={`M-13 ${dy}l2-9 3 1Z`} fill="#0000e0" strokeWidth="0.500" />
      <path d={`M-10.500 ${dy - 12}h4v3l-3 2`} />
    </g>
  )
}

function Viewport() {
  return (
    <svg
      viewBox="298 171 1160 747"
      preserveAspectRatio="xMinYMin meet"
      className="absolute inset-0 size-full"
      fill="none"
      fontFamily="'Liberation Mono', monospace"
      fontSize="14"
    >
      <defs>
        <linearGradient id="upper" gradientUnits="userSpaceOnUse" x1="453" y1="560" x2="1200" y2="680">
          <stop offset="0" stopColor="#d27b00" />
          <stop offset="0.35" stopColor="#e28500" />
          <stop offset="0.7" stopColor="#fb9300" />
          <stop offset="1" stopColor="#ff9a06" />
        </linearGradient>
        <linearGradient id="shade" gradientUnits="userSpaceOnUse" x1="0" y1="523" x2="0" y2="570">
          <stop offset="0" stopColor="#b36800" stopOpacity="0.7" />
          <stop offset="1" stopColor="#d98000" stopOpacity="0" />
        </linearGradient>
        <linearGradient id="lower" gradientUnits="userSpaceOnUse" x1="453" y1="600" x2="1309" y2="800">
          <stop offset="0" stopColor="#8c5204" />
          <stop offset="0.5" stopColor="#b26906" />
          <stop offset="1" stopColor="#c4750a" />
        </linearGradient>
      </defs>

      {/* datum planes */}
      <path d="M290 488.500H1321.500V825.500H290Z" fill="#f7f3ee" stroke="#996633" />
      <path d="M290 499.500H1309.500V813.500H290Z" fill="#f0e9e3" stroke="#996633" />

      {/* surfaces */}
      <path d="M453 536C738 536 1024 523 1309 523V717C1024 717 738 592 453 592Z" fill="url(#upper)" />
      <path d="M453 536C738 536 1024 523 1309 523V717C1024 717 738 592 453 592Z" fill="url(#shade)" />
      <path d="M453 592C738 592 1024 717 1309 717V813.500C1024 813.500 738 639 453 639Z" fill="url(#lower)" />
      <path d="M453 592C738 592 1024 717 1309 717M453 639C738 639 1024 813.500 1309 813.500" stroke="#222" strokeWidth="1.200" />
      <path d="M453 536.500h34M1275 526.500h34" stroke="#222" />
      <path d="M298 591.500H1344M881.500 499V813" stroke="#996633" />
      <path d="M452.500 536V639M1309.500 523V813" stroke="#2fd04c" />

      {/* dimension labels */}
      <path d="M491 492h19v22h-19zM491 537h46v22h-46zM491 584h46v22h-46z" fill="#fbf6f0" fillOpacity="0.62" />
      <g fill="#0000e0">
        <text x="496" y="508">1</text>
        <text x="497" y="553">0.00</text>
        <text x="497" y="600">0.00</text>
        <text x="1353" y="518">2</text>
      </g>
      <Leader x={468} y={503} dy={38} />
      <Leader x={468} y={547} dy={39} />
      <Leader x={468} y={595} dy={38} />
      <Leader x={1325} y={512} dy={38} />

      {/* tangent arrows */}
      <path
        d="M463 593.500H511L559 592.500M553 584l16 11-13 7M454 638.500l89 4M540 637l-38 15M1309 814.500 1148 812.500M1160 801l-12 11 33 11M1414 723.500h-73M1349 716l-12 5 12 6"
        stroke="#ff0000"
      />
      <path d="M424 517h73v32h-73zM1260 502h72v41h-72z" stroke="#ff0000" strokeWidth="2" />
      {[592, 639].map((cy) => (
        <circle key={cy} cx="453" cy={cy} r="5.500" fill="#ffc800" stroke="#5c4a10" strokeWidth="1.300" />
      ))}

      {/* coordinate system */}
      <path d="M881.500 558v33" stroke="#55ff22" />
      <path d="M879 571l2.500-9 2 9Z" fill="#22ff33" />
      <path d="M902 589l8 2.500-8 2.500Z" fill="#ff3333" />
      <text x="884" y="556" fill="#33ff33">Y</text>
      <text x="884" y="589" fill="#33eeff">Z</text>
      <text x="917" y="589" fill="#ff3333">X</text>
      <g fill="#996633">
        <text x="884" y="605">PRT_CSYS_DEF_1</text>
        <text x="881" y="812">RIGHT_1</text>
        <text x="1310" y="591">TOP</text>
        <text x="1320" y="591">TOP1</text>
      </g>

      {/* notes */}
      <g fill="#ff1010" fontFamily="'Noto Sans CJK SC', sans-serif" fontSize="20" fontWeight="300">
        <text x="580" y="391">改成法向后，曲面的边就和我们修改后的边完全重合了</text>
        <text x="574" y="453">当只有主链时，法向所形成的边界的形状，只是与主链相链接</text>
        <text x="574" y="473">的端点形成的边界曲线的手柄方向和主链的方向相同</text>
        <text x="471" y="726">主链的曲线的法向，就是另</text>
        <text x="471" y="746">外两条曲线的水平方向</text>
      </g>
    </svg>
  )
}

function Watermark() {
  return (
    <svg viewBox="0 0 180 80" className="absolute right-2.5 bottom-1 h-20 w-45" role="img" aria-label="野火论坛">
      <g fontFamily="'Noto Sans CJK SC', sans-serif" fontSize="40" fontStyle="italic" fontWeight="350">
        <text x="3 46" y="53" fill="#ff6a35">野火</text>
        <text x="90 130" y="53" fill="#000">论坛</text>
      </g>
      <path d="M73 0c12 9 16 20 10 29-4 7-8 7-11 12-3-1-3-4-3-6 2-8 9-9 6-24 4 3 5 7 4 12 3-7 0-16-6-23Z" fill="#ff6a35" />
      <text x="5" y="73" fill="#999" fontFamily="'DejaVu Sans', sans-serif" fontSize="16" fontStyle="italic">
        www.proewildfire.cn
      </text>
    </svg>
  )
}

export default function App() {
  return (
    <div className="flex min-h-screen bg-white font-['Noto_Sans','Noto_Sans_CJK_SC',sans-serif]">
      <div className="w-1 shrink-0 border-r border-[#a8a8a8] bg-linear-to-b from-[#a9b4b6] via-[#7c8084] to-[#989c9a]" />
      <div className="flex min-w-0 flex-1 flex-col">
        <TitleBar />
        <TabBar />
        <Ribbon />
        <div className="flex flex-1">
          <Sidebar />
          <main className="relative min-w-0 flex-1 overflow-hidden bg-white">
            <Viewport />
            <ViewToolbar />
            <Watermark />
          </main>
        </div>
      </div>
    </div>
  )
}
